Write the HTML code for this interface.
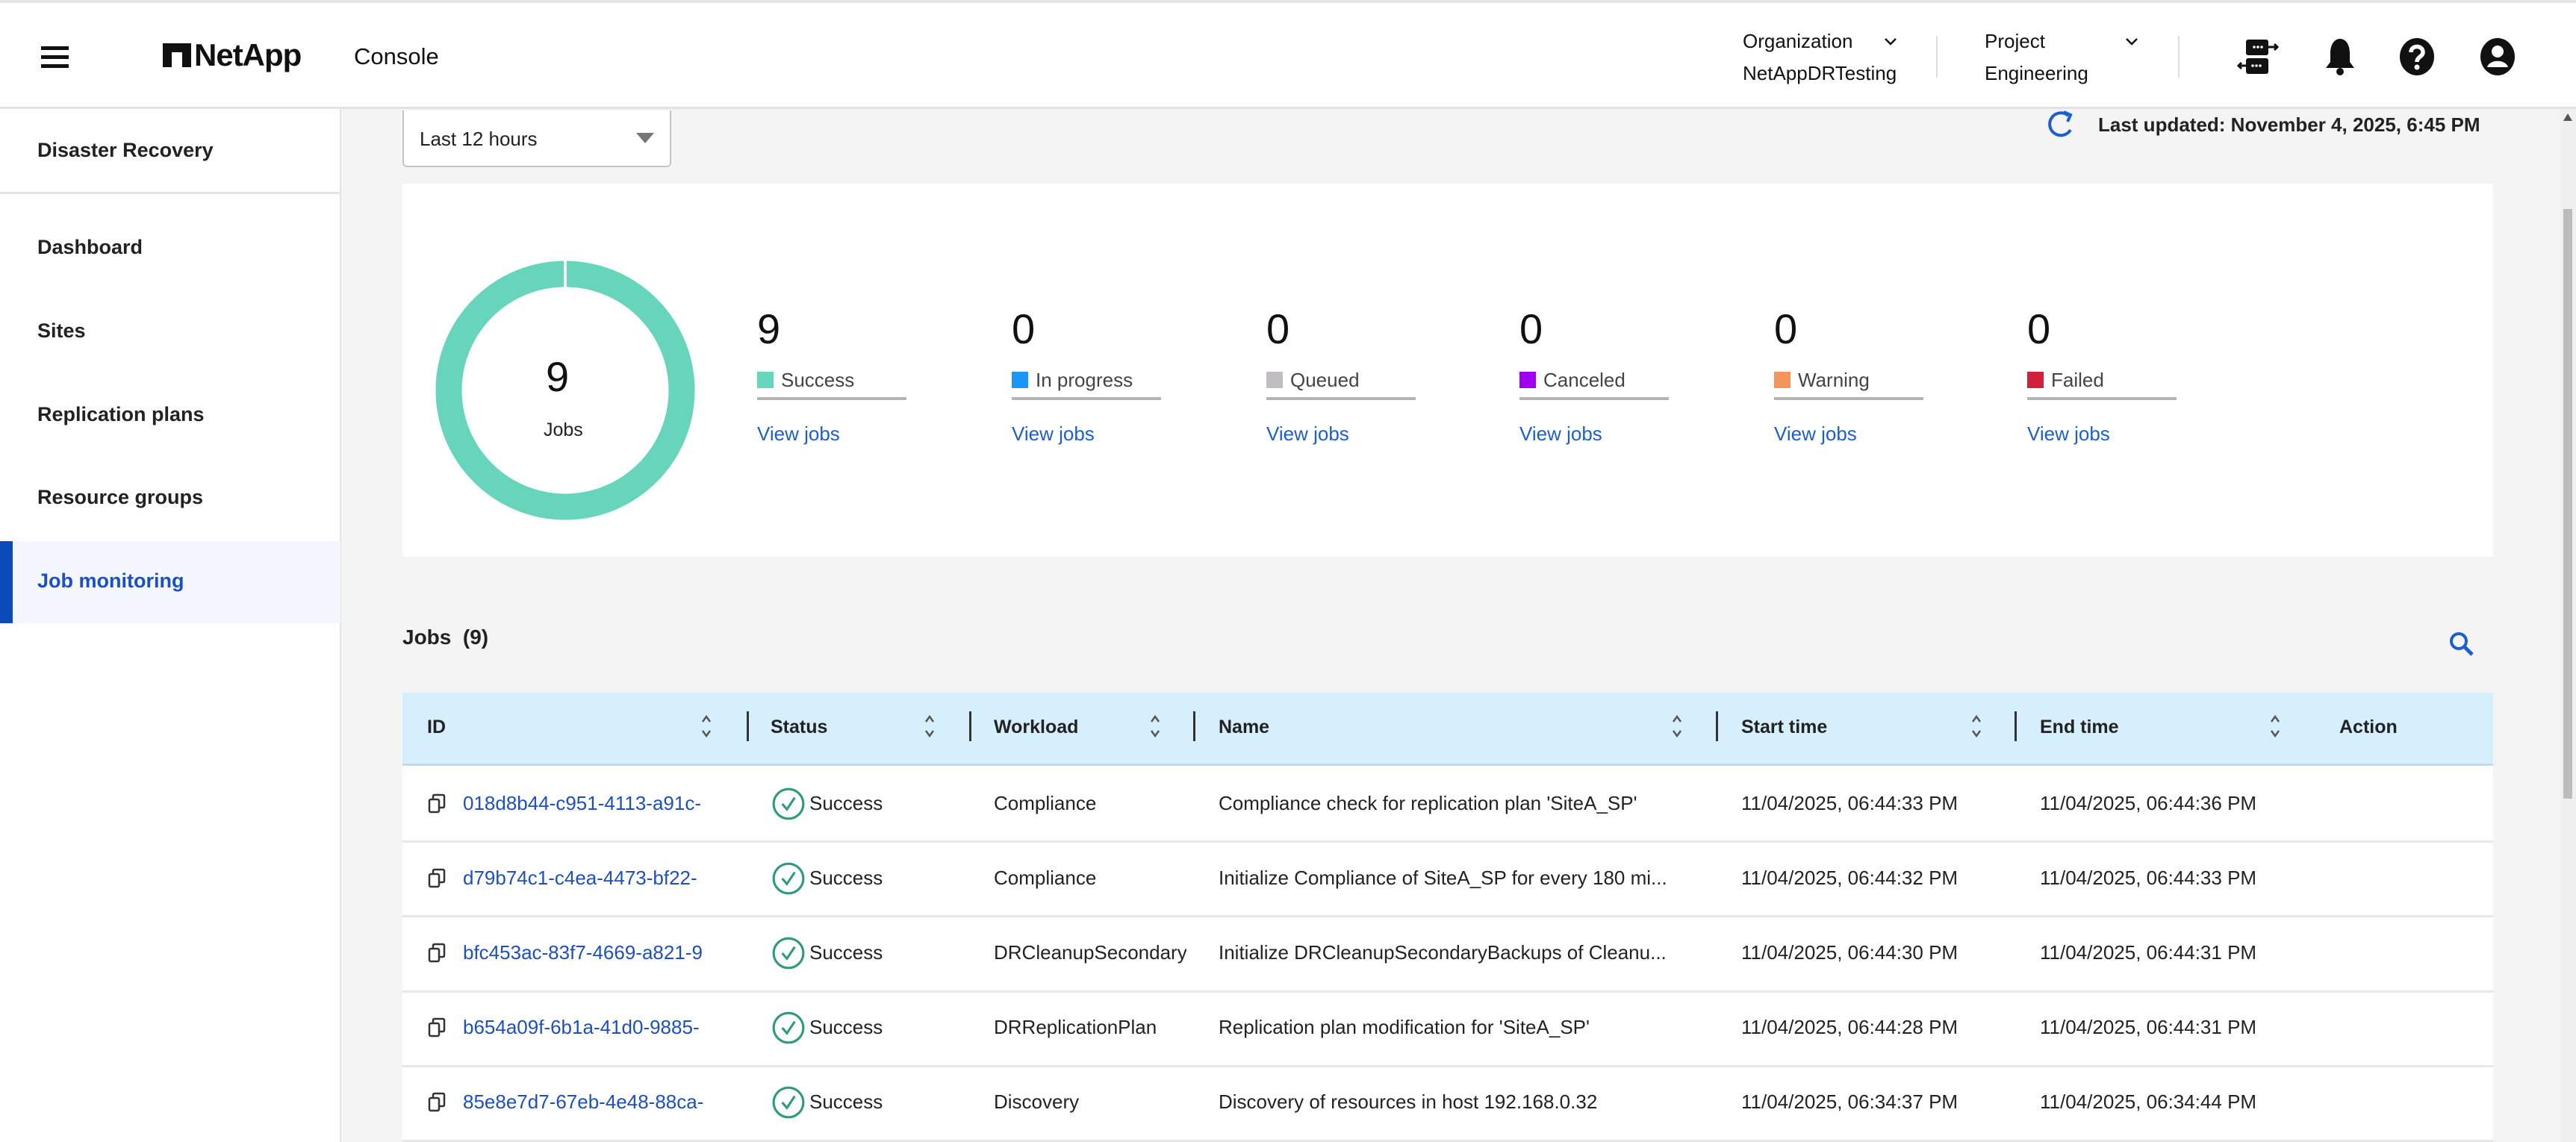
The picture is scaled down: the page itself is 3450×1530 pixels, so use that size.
<!DOCTYPE html>
<html><head><meta charset="utf-8"><style>
*{margin:0;padding:0;box-sizing:border-box}
body{width:3450px;height:1530px;overflow:hidden;background:#f4f4f4;font-family:"Liberation Sans",sans-serif;color:#1a1a1a;position:relative}
.a{position:absolute;white-space:nowrap}
.hdr{left:0;top:0;width:3450px;height:146px;background:#fff;border-top:4px solid #e6e3e6;border-bottom:3px solid #e4e0e4}
.side{left:0;top:146px;width:457px;height:1384px;background:#fff;border-right:2px solid #e6e3e6}
.nav{left:50px;font-size:27px;font-weight:bold;color:#222}
.vj{font-size:26px;color:#1d5fc9}
.lg{font-size:26px;color:#444}
.sq{display:inline-block;width:22px;height:22px;vertical-align:-2px;margin-right:10px}
.ul{height:4px;width:200px;background:#b4b4b4}
.num{font-size:56px;color:#111}
.th{font-size:25px;font-weight:bold;color:#222;top:960px}
.dv{width:3px;height:40px;background:#333;top:953px}
.so{width:16px;height:36px;top:955px}
.td{font-size:26px;color:#222}
.id{font-size:26px;color:#1d4fbf}
</style></head><body>
<div class="a hdr"></div>
<!-- hamburger -->
<div class="a" style="left:55px;top:62px;width:37px;height:5px;background:#111"></div>
<div class="a" style="left:55px;top:74px;width:37px;height:5px;background:#111"></div>
<div class="a" style="left:55px;top:86px;width:37px;height:5px;background:#111"></div>
<!-- logo -->
<svg class="a" style="left:218px;top:58px" width="38" height="32" viewBox="0 0 38 32"><path d="M0 0H38V32H26V12H12V32H0Z" fill="#111"/></svg>
<div class="a" style="left:260px;top:50px;font-size:42px;font-weight:bold;letter-spacing:-1px;color:#111">NetApp</div>
<div class="a" style="left:474px;top:58px;font-size:31px;color:#111">Console</div>
<div class="a" style="left:2334px;top:40px;font-size:26px;color:#111">Organization</div>
<div class="a" style="left:2334px;top:83px;font-size:26px;color:#111">NetAppDRTesting</div>
<svg class="a" style="left:2523px;top:50px" width="18" height="12"><path d="M2 2L9 9L16 2" stroke="#111" stroke-width="2.5" fill="none"/></svg>
<div class="a" style="left:2593px;top:48px;width:2px;height:56px;background:#ddd"></div>
<div class="a" style="left:2658px;top:40px;font-size:26px;color:#111">Project</div>
<div class="a" style="left:2658px;top:83px;font-size:26px;color:#111">Engineering</div>
<svg class="a" style="left:2846px;top:50px" width="18" height="12"><path d="M2 2L9 9L16 2" stroke="#111" stroke-width="2.5" fill="none"/></svg>
<div class="a" style="left:2917px;top:48px;width:2px;height:56px;background:#ddd"></div>
<!-- icons -->
<svg class="a" style="left:2996px;top:50px" width="56" height="52" viewBox="0 0 56 52"><rect x="12" y="3" width="30" height="21" rx="3" fill="#111"/><rect x="12" y="28" width="30" height="21" rx="3" fill="#111"/><path d="M42 13H54M50 9L54 13L50 17M12 38H2M6 34L2 38L6 42" stroke="#111" stroke-width="3" fill="none"/><circle cx="23" cy="13" r="1.8" fill="#fff"/><circle cx="28" cy="13" r="1.8" fill="#fff"/><circle cx="33" cy="13" r="1.8" fill="#fff"/><circle cx="21" cy="38" r="1.8" fill="#fff"/><circle cx="26" cy="38" r="1.8" fill="#fff"/><circle cx="31" cy="38" r="1.8" fill="#fff"/></svg>
<svg class="a" style="left:3112px;top:50px" width="44" height="52" viewBox="0 0 44 52"><path d="M22 2C13 2 9 12 9 21V33L3 41H41L35 33V21C35 12 31 2 22 2Z" fill="#111"/><circle cx="22" cy="46" r="5" fill="#111"/></svg>
<svg class="a" style="left:3213px;top:50px" width="48" height="52" viewBox="0 0 48 52"><ellipse cx="24" cy="26" rx="23" ry="25" fill="#111"/><path d="M16 20C16 10 32 10 32 20C32 26 24 26 24 33" stroke="#fff" stroke-width="5.5" fill="none"/><circle cx="24" cy="40" r="3.5" fill="#fff"/></svg>
<svg class="a" style="left:3321px;top:50px" width="48" height="52" viewBox="0 0 48 52"><ellipse cx="24" cy="26" rx="23" ry="25" fill="#111"/><circle cx="24" cy="19" r="8" fill="#fff"/><path d="M10 40C13 29 35 29 38 40Z" fill="#fff"/></svg>
<!-- sidebar -->
<div class="a side"></div>
<div class="a nav" style="top:186px">Disaster Recovery</div>
<div class="a" style="left:0;top:257px;width:457px;height:3px;background:#e6e3e6"></div>
<div class="a nav" style="top:316px">Dashboard</div>
<div class="a nav" style="top:428px">Sites</div>
<div class="a nav" style="top:540px">Replication plans</div>
<div class="a nav" style="top:651px">Resource groups</div>
<div class="a" style="left:0;top:725px;width:456px;height:110px;background:#f4f7fd"></div>
<div class="a" style="left:0;top:725px;width:17px;height:110px;background:#0a4ab8"></div>
<div class="a nav" style="top:763px;color:#1b4fc4">Job monitoring</div>
<!-- dropdown -->
<div class="a" style="left:539px;top:148px;width:360px;height:76px;background:#fff;border:2px solid #c4c4c4;border-top:none;border-radius:0 0 6px 6px"></div>
<div class="a" style="left:562px;top:171px;font-size:26px;color:#222">Last 12 hours</div>
<svg class="a" style="left:852px;top:178px" width="24" height="16"><path d="M0 0H24L12 14Z" fill="#777"/></svg>
<!-- last updated -->
<svg class="a" style="left:2740px;top:146px" width="40" height="42" viewBox="0 0 40 42"><path d="M30 9A15 15 0 1 0 33 28" stroke="#1a5fd0" stroke-width="4" fill="none"/><path d="M24 4L33 8L29 17" stroke="#1a5fd0" stroke-width="4" fill="none"/></svg>
<div class="a" style="left:2810px;top:152px;font-size:26px;font-weight:bold;color:#222">Last updated: November 4, 2025, 6:45 PM</div>
<!-- scrollbar -->
<div class="a" style="left:3428px;top:146px;width:22px;height:1384px;background:#f0f0f0"></div>
<svg class="a" style="left:3433px;top:152px" width="12" height="10"><path d="M0 10L6 0L12 10Z" fill="#555"/></svg>
<div class="a" style="left:3433px;top:280px;width:12px;height:790px;background:#bcbcbc"></div>
<!-- summary -->
<div class="a" style="left:539px;top:246px;width:2800px;height:500px;background:#fff"></div>
<svg class="a" style="left:583px;top:349px" width="348" height="348" viewBox="0 0 348 348"><circle cx="174" cy="174" r="156" stroke="#66d5bb" stroke-width="35" fill="none"/><rect x="172" y="0" width="4" height="40" fill="#fff"/></svg>
<div class="a" style="left:731px;top:472px;font-size:56px;color:#111">9</div>
<div class="a" style="left:728px;top:562px;font-size:25px;color:#222">Jobs</div>

<div class="a num" style="left:1014px;top:408px">9</div>
<div class="a lg" style="left:1014px;top:494px"><span class="sq" style="background:#66d5bb"></span>Success</div>
<div class="a ul" style="left:1014px;top:532px"></div>
<div class="a vj" style="left:1014px;top:566px">View jobs</div>

<div class="a num" style="left:1355px;top:408px">0</div>
<div class="a lg" style="left:1355px;top:494px"><span class="sq" style="background:#1a96f8"></span>In progress</div>
<div class="a ul" style="left:1355px;top:532px"></div>
<div class="a vj" style="left:1355px;top:566px">View jobs</div>

<div class="a num" style="left:1696px;top:408px">0</div>
<div class="a lg" style="left:1696px;top:494px"><span class="sq" style="background:#c0bec0"></span>Queued</div>
<div class="a ul" style="left:1696px;top:532px"></div>
<div class="a vj" style="left:1696px;top:566px">View jobs</div>

<div class="a num" style="left:2035px;top:408px">0</div>
<div class="a lg" style="left:2035px;top:494px"><span class="sq" style="background:#a000f0"></span>Canceled</div>
<div class="a ul" style="left:2035px;top:532px"></div>
<div class="a vj" style="left:2035px;top:566px">View jobs</div>

<div class="a num" style="left:2376px;top:408px">0</div>
<div class="a lg" style="left:2376px;top:494px"><span class="sq" style="background:#f4965a"></span>Warning</div>
<div class="a ul" style="left:2376px;top:532px"></div>
<div class="a vj" style="left:2376px;top:566px">View jobs</div>

<div class="a num" style="left:2715px;top:408px">0</div>
<div class="a lg" style="left:2715px;top:494px"><span class="sq" style="background:#d21f3c"></span>Failed</div>
<div class="a ul" style="left:2715px;top:532px"></div>
<div class="a vj" style="left:2715px;top:566px">View jobs</div>

<!-- jobs heading -->
<div class="a" style="left:539px;top:838px;font-size:28px;font-weight:bold;color:#222">Jobs &nbsp;(9)</div>
<svg class="a" style="left:3280px;top:846px" width="34" height="34" viewBox="0 0 34 34"><circle cx="13" cy="13" r="10" stroke="#1a5fd0" stroke-width="4" fill="none"/><path d="M21 21L31 31" stroke="#1a5fd0" stroke-width="5"/></svg>

<!-- table -->
<div class="a" style="left:539px;top:928px;width:2800px;height:602px;background:#fff"></div>
<div class="a" style="left:539px;top:928px;width:2800px;height:98px;background:#d5effd;border-bottom:3px solid #c3dbe8"></div>
<div class="a th" style="left:572px">ID</div>
<div class="a th" style="left:1032px">Status</div>
<div class="a th" style="left:1331px">Workload</div>
<div class="a th" style="left:1632px">Name</div>
<div class="a th" style="left:2332px">Start time</div>
<div class="a th" style="left:2732px">End time</div>
<div class="a th" style="left:3133px">Action</div>
<div class="a dv" style="left:1000px"></div>
<div class="a dv" style="left:1298px"></div>
<div class="a dv" style="left:1598px"></div>
<div class="a dv" style="left:2298px"></div>
<div class="a dv" style="left:2698px"></div>
<svg class="a so" style="left:938px" viewBox="0 0 16 36"><path d="M3 12L8 5L13 12M3 24L8 31L13 24" stroke="#555" stroke-width="2.5" fill="none"/></svg>
<svg class="a so" style="left:1237px" viewBox="0 0 16 36"><path d="M3 12L8 5L13 12M3 24L8 31L13 24" stroke="#555" stroke-width="2.5" fill="none"/></svg>
<svg class="a so" style="left:1539px" viewBox="0 0 16 36"><path d="M3 12L8 5L13 12M3 24L8 31L13 24" stroke="#555" stroke-width="2.5" fill="none"/></svg>
<svg class="a so" style="left:2238px" viewBox="0 0 16 36"><path d="M3 12L8 5L13 12M3 24L8 31L13 24" stroke="#555" stroke-width="2.5" fill="none"/></svg>
<svg class="a so" style="left:2639px" viewBox="0 0 16 36"><path d="M3 12L8 5L13 12M3 24L8 31L13 24" stroke="#555" stroke-width="2.5" fill="none"/></svg>
<svg class="a so" style="left:3039px" viewBox="0 0 16 36"><path d="M3 12L8 5L13 12M3 24L8 31L13 24" stroke="#555" stroke-width="2.5" fill="none"/></svg>

<!-- rows -->
<div class="a" style="left:539px;top:1126px;width:2800px;height:3px;background:#e8e6e8"></div>
<div class="a" style="left:539px;top:1226px;width:2800px;height:3px;background:#e8e6e8"></div>
<div class="a" style="left:539px;top:1327px;width:2800px;height:3px;background:#e8e6e8"></div>
<div class="a" style="left:539px;top:1427px;width:2800px;height:3px;background:#e8e6e8"></div>
<div class="a" style="left:539px;top:1527px;width:2800px;height:3px;background:#e8e6e8"></div>

<svg width="0" height="0" style="position:absolute"><defs>
<symbol id="cp" viewBox="0 0 24 28"><rect x="2" y="8" width="13" height="17" rx="2" stroke="#333" stroke-width="2.5" fill="#fff"/><path d="M7 8V4Q7 2 9 2H20Q22 2 22 4V17Q22 19 20 19H15" stroke="#333" stroke-width="2.5" fill="none"/></symbol>
<symbol id="ck" viewBox="0 0 44 44"><circle cx="22" cy="22" r="19" stroke="#2e9b7a" stroke-width="3" fill="none"/><path d="M14 22L20 29L30 14" stroke="#2e9b7a" stroke-width="3" fill="none"/></symbol>
</defs></svg>

<!-- row 1 -->
<svg class="a" style="left:573px;top:1063px" width="24" height="28"><use href="#cp"/></svg>
<div class="a id" style="left:620px;top:1061px">018d8b44-c951-4113-a91c-</div>
<svg class="a" style="left:1033px;top:1054px" width="46" height="46"><use href="#ck"/></svg>
<div class="a td" style="left:1084px;top:1061px">Success</div>
<div class="a td" style="left:1331px;top:1061px">Compliance</div>
<div class="a td" style="left:1632px;top:1061px">Compliance check for replication plan 'SiteA_SP'</div>
<div class="a td" style="left:2332px;top:1061px">11/04/2025, 06:44:33 PM</div>
<div class="a td" style="left:2732px;top:1061px">11/04/2025, 06:44:36 PM</div>
<!-- row 2 -->
<svg class="a" style="left:573px;top:1163px" width="24" height="28"><use href="#cp"/></svg>
<div class="a id" style="left:620px;top:1161px">d79b74c1-c4ea-4473-bf22-</div>
<svg class="a" style="left:1033px;top:1154px" width="46" height="46"><use href="#ck"/></svg>
<div class="a td" style="left:1084px;top:1161px">Success</div>
<div class="a td" style="left:1331px;top:1161px">Compliance</div>
<div class="a td" style="left:1632px;top:1161px">Initialize Compliance of SiteA_SP for every 180 mi...</div>
<div class="a td" style="left:2332px;top:1161px">11/04/2025, 06:44:32 PM</div>
<div class="a td" style="left:2732px;top:1161px">11/04/2025, 06:44:33 PM</div>
<!-- row 3 -->
<svg class="a" style="left:573px;top:1263px" width="24" height="28"><use href="#cp"/></svg>
<div class="a id" style="left:620px;top:1261px">bfc453ac-83f7-4669-a821-9</div>
<svg class="a" style="left:1033px;top:1254px" width="46" height="46"><use href="#ck"/></svg>
<div class="a td" style="left:1084px;top:1261px">Success</div>
<div class="a td" style="left:1331px;top:1261px;width:258px;overflow:hidden">DRCleanupSecondaryBackups</div>
<div class="a td" style="left:1632px;top:1261px">Initialize DRCleanupSecondaryBackups of Cleanu...</div>
<div class="a td" style="left:2332px;top:1261px">11/04/2025, 06:44:30 PM</div>
<div class="a td" style="left:2732px;top:1261px">11/04/2025, 06:44:31 PM</div>
<!-- row 4 -->
<svg class="a" style="left:573px;top:1363px" width="24" height="28"><use href="#cp"/></svg>
<div class="a id" style="left:620px;top:1361px">b654a09f-6b1a-41d0-9885-</div>
<svg class="a" style="left:1033px;top:1354px" width="46" height="46"><use href="#ck"/></svg>
<div class="a td" style="left:1084px;top:1361px">Success</div>
<div class="a td" style="left:1331px;top:1361px">DRReplicationPlan</div>
<div class="a td" style="left:1632px;top:1361px">Replication plan modification for 'SiteA_SP'</div>
<div class="a td" style="left:2332px;top:1361px">11/04/2025, 06:44:28 PM</div>
<div class="a td" style="left:2732px;top:1361px">11/04/2025, 06:44:31 PM</div>
<!-- row 5 -->
<svg class="a" style="left:573px;top:1463px" width="24" height="28"><use href="#cp"/></svg>
<div class="a id" style="left:620px;top:1461px">85e8e7d7-67eb-4e48-88ca-</div>
<svg class="a" style="left:1033px;top:1454px" width="46" height="46"><use href="#ck"/></svg>
<div class="a td" style="left:1084px;top:1461px">Success</div>
<div class="a td" style="left:1331px;top:1461px">Discovery</div>
<div class="a td" style="left:1632px;top:1461px">Discovery of resources in host 192.168.0.32</div>
<div class="a td" style="left:2332px;top:1461px">11/04/2025, 06:34:37 PM</div>
<div class="a td" style="left:2732px;top:1461px">11/04/2025, 06:34:44 PM</div>
</body></html>
